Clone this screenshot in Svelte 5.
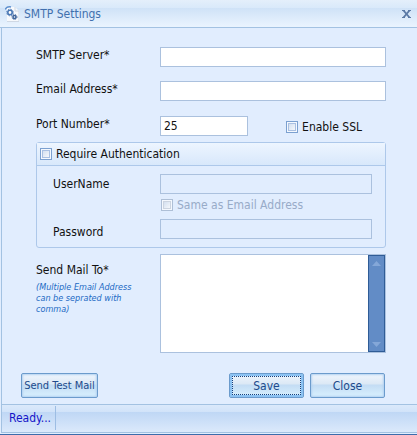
<script lang="ts">
  let server = $state("");
  let email = $state("");
  let port = $state("25");
  let ssl = $state(false);
  let requireAuth = $state(false);
  let sameAsEmail = $state(false);
  let username = $state("");
  let password = $state("");
  let mailTo = $state("");
</script>

<div class="window">
  <header class="titlebar">
    <svg class="titlebar__icon" viewBox="0 0 14 16" aria-hidden="true">
      <path d="M2 1H10L14 5V16H2Z" fill="#f7f9fc" />
      <path d="M10 1V5H14M14 5V15.5H2" fill="none" stroke="#cfd8e4" />
      <path d="M0 3.5Q2 0 6 1" fill="none" stroke="#5d8fce" stroke-width="1.5" />
      <circle cx="5" cy="6.5" r="2.2" fill="#fff" stroke="#4a78b5" stroke-width="1.6" />
      <circle cx="5" cy="6.5" r="3.3" fill="none" stroke="#4a78b5" stroke-dasharray="1.3 1.3" />
      <circle cx="9.5" cy="11" r="1.5" fill="#fff" stroke="#3f659c" stroke-width="1.5" />
      <circle cx="9.5" cy="11" r="2.5" fill="none" stroke="#3f659c" stroke-dasharray="1 1" />
    </svg>
    <h1 class="titlebar__text">SMTP Settings</h1>
    <button class="titlebar__close" type="button" aria-label="Close window">
      <svg viewBox="0 0 9 8" aria-hidden="true">
        <path d="M0 0.5H3M6 0.5H9M0 7.5H3M6 7.5H9" stroke="#5b7aa6" />
        <path d="M1.5 0.5L7.5 7.5M7.5 0.5L1.5 7.5" stroke="#5b7aa6" stroke-width="1.8" />
      </svg>
    </button>
  </header>

  <form class="form">
    <div class="row">
      <label class="row__label" for="server">SMTP Server*</label>
      <input class="field" id="server" type="text" bind:value={server} />
    </div>
    <div class="row">
      <label class="row__label" for="email">Email Address*</label>
      <input class="field" id="email" type="text" bind:value={email} />
    </div>
    <div class="row row--port">
      <label class="row__label" for="port">Port Number*</label>
      <input class="field field--port" id="port" type="text" bind:value={port} />
      <label class="check check--ssl">
        <input type="checkbox" bind:checked={ssl} />
        <span>Enable SSL</span>
      </label>
    </div>

    <section class="group">
      <div class="group__header">
        <label class="check">
          <input type="checkbox" bind:checked={requireAuth} />
          <span>Require Authentication</span>
        </label>
      </div>
      <div class="group__body">
        <label class="group__label" for="username">UserName</label>
        <input class="field" id="username" type="text" bind:value={username} disabled={!requireAuth} />
        <label class="check check--same" class:check--disabled={!requireAuth}>
          <input type="checkbox" bind:checked={sameAsEmail} disabled={!requireAuth} />
          <span>Same as Email Address</span>
        </label>
        <label class="group__label group__label--low" for="password">Password</label>
        <input class="field" id="password" type="password" bind:value={password} disabled={!requireAuth} />
      </div>
    </section>

    <div class="row row--mail">
      <div class="row__label">
        <label for="mail-to">Send Mail To*</label>
        <p class="hint">(Multiple Email Address can be seprated with comma)</p>
      </div>
      <div class="memo">
        <textarea class="memo__text" id="mail-to" bind:value={mailTo}></textarea>
        <div class="memo__scroll" aria-hidden="true">
          <svg viewBox="0 0 9 5"><path d="M0 5L4.5 0L9 5Z" /></svg>
          <svg viewBox="0 0 9 5"><path d="M0 0L4.5 5L9 0Z" /></svg>
        </div>
      </div>
    </div>

    <div class="actions">
      <button class="btn btn--test" type="button">Send Test Mail</button>
      <button class="btn btn--default" type="button">Save</button>
      <button class="btn" type="button">Close</button>
    </div>
  </form>

  <footer class="status">
    <span class="status__text">Ready...</span>
  </footer>
</div>

<style>
  :global(body) {
    background: #e1edfe;
  }

  .window {
    font: 12px/16px "DejaVu Sans Condensed", "DejaVu Sans", sans-serif;
    color: #111;
    background: #e1edfe;
    border-bottom: 1px solid #3c6cab;
  }

  .window * {
    box-sizing: border-box;
  }

  .titlebar {
    display: flex;
    align-items: center;
    height: 28px;
    padding: 0 6px 0 5px;
    border-bottom: 1px solid #a3c2e2;
    background: linear-gradient(#e4effb 0, #d9e9fa 8px, #cfe2f7 8px, #e9f3fe 26px);
  }

  .titlebar__icon {
    width: 14px;
    height: 16px;
  }

  .titlebar__text {
    flex: 1;
    margin: 0 0 0 5px;
    font-size: 12px;
    font-weight: normal;
    color: #4170ae;
  }

  .titlebar__close {
    display: flex;
    padding: 0;
    border: 0;
    background: none;
  }

  .titlebar__close svg {
    width: 9px;
    height: 8px;
  }

  .form {
    margin-left: 1px;
    padding: 19px 31px 6px 34px;
    border-left: 1px solid #a3c2e2;
  }

  .row {
    display: flex;
    align-items: flex-start;
    margin-bottom: 14px;
  }

  .row__label {
    width: 124px;
    flex-shrink: 0;
  }

  .row--port {
    margin: 0 0 6px;
    padding-top: 1px;
  }

  .field {
    flex: 1;
    min-width: 0;
    height: 20px;
    padding: 0 3px;
    border: 1px solid #abc1de;
    border-radius: 0;
    background: #fff;
    font: inherit;
    color: #111;
  }

  .field:disabled {
    background: transparent;
  }

  .field--port {
    flex: 0 0 88px;
  }

  .check {
    display: flex;
    align-items: center;
    gap: 4px;
  }

  .check--ssl {
    flex-shrink: 0;
    margin: 3px 24px 0 auto;
  }

  .check input {
    appearance: none;
    width: 12px;
    height: 12px;
    margin: 0;
    flex-shrink: 0;
    border: 1px solid #7ba0d0;
    background: linear-gradient(135deg, #c9d8ec, #fff);
    box-shadow: inset 0 0 0 1px #f4f8fe, inset 0 0 0 2px #a9c0e2;
  }

  .check input:checked {
    background: #4170ae;
  }

  .check--disabled {
    color: #98abc8;
  }

  .check--disabled input {
    border-color: #aebfd6;
    box-shadow: inset 0 0 0 1px #f4f8fe, inset 0 0 0 2px #ccd4e0;
  }

  .group {
    border: 1px solid #adc8ea;
    border-radius: 3px;
  }

  .group__header {
    padding: 3px;
    border-bottom: 1px solid #adc8ea;
    background: linear-gradient(#edf5ff, #d8e8fb);
  }

  .group__body {
    display: grid;
    grid-template-columns: 107px 1fr;
    padding: 8px 13px 8px 16px;
  }

  .group__label {
    line-height: 20px;
  }

  .group__label--low {
    align-self: end;
    line-height: 14px;
  }

  .check--same {
    grid-column: 2;
    margin: 3px 0 6px 1px;
  }

  .row--mail {
    margin: 6px 0 20px;
  }

  .row--mail label {
    display: block;
    padding-top: 8px;
  }

  .hint {
    margin: 4px 16px 0 0;
    font-size: 9px;
    line-height: 11px;
    font-style: italic;
    color: #1c6ac4;
  }

  .memo {
    display: flex;
    flex: 1;
    height: 99px;
    border: 1px solid #abc1de;
    background: #fff;
  }

  .memo__text {
    flex: 1;
    min-width: 0;
    padding: 2px 3px;
    border: 0;
    outline: 0;
    resize: none;
    background: #fff;
    font: inherit;
  }

  .memo__scroll {
    display: flex;
    flex-direction: column;
    justify-content: space-between;
    align-items: center;
    width: 17px;
    padding: 5px 0 4px;
    border: 1px solid #2f5c96;
    background: #628cc6;
  }

  .memo__scroll svg {
    width: 9px;
    height: 5px;
    fill: #84a7d8;
  }

  .actions {
    display: flex;
    gap: 6px;
    margin: 0 1px 0 -15px;
  }

  .btn {
    width: 75px;
    height: 25px;
    padding: 0;
    border: 1px solid #6b9bcc;
    border-radius: 2px;
    background: linear-gradient(#f0f6fd 0, #dbe8f5 10px, #c3dcf4 11px, #d9f1fe 100%);
    box-shadow: inset 0 0 2px 1px #b3d1f0;
    font: inherit;
    color: #204a8b;
    white-space: nowrap;
  }

  .btn--test {
    width: 77px;
    margin-right: auto;
    font-size: 11px;
  }

  .btn--default {
    box-shadow: inset 0 0 0 2px #8dc3f3;
    outline: 1px dotted #17407c;
    outline-offset: -4px;
  }

  .status {
    display: flex;
    height: 29px;
    margin: 0 0 1px 1px;
    padding: 1px 0 2px;
    border: solid #a3c2e2;
    border-width: 1px 0 1px 1px;
    background: linear-gradient(#dbe9fb 0, #d1e3f9 7px, #bfd7f5 7px, #dbe9fb 100%);
  }

  .status__text {
    padding: 0 4px 0 7px;
    border-right: 1px solid #9dbde3;
    line-height: 24px;
    color: #1414c8;
  }
</style>
